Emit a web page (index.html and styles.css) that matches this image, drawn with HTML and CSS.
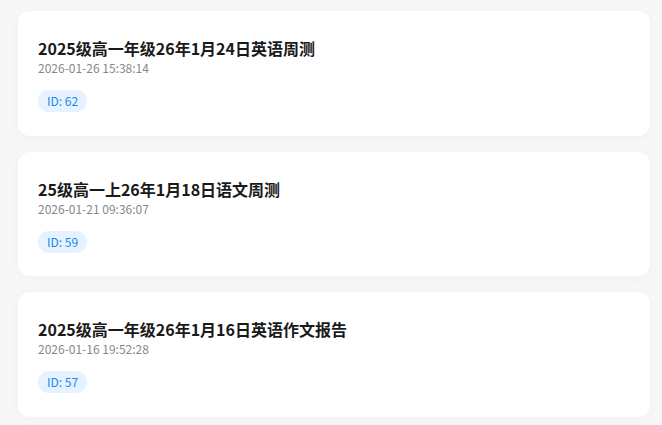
FILE: index.html
```html
<!DOCTYPE html>
<html lang="zh-CN">
<head>
<meta charset="utf-8">
<link rel="stylesheet" href="styles.css">
</head>
<body>
<div class="list">
  <div class="card">
    <div class="title">2025级高一年级26年1月24日英语周测</div>
    <div class="date">2026-01-26 15:38:14</div>
    <span class="badge">ID: 62</span>
  </div>
  <div class="card">
    <div class="title">25级高一上26年1月18日语文周测</div>
    <div class="date">2026-01-21 09:36:07</div>
    <span class="badge">ID: 59</span>
  </div>
  <div class="card">
    <div class="title">2025级高一年级26年1月16日英语作文报告</div>
    <div class="date">2026-01-16 19:52:28</div>
    <span class="badge">ID: 57</span>
  </div>
</div>
</body>
</html>
```
FILE: styles.css
```css
html, body {
  margin: 0;
  padding: 0;
  background: #f7f7f7;
  font-family: "Noto Sans CJK SC", "Noto Sans", sans-serif;
}
.list {
  display: flex;
  flex-direction: column;
  gap: 16px;
  padding: 11px 12px 8px 18px;
}
.card {
  background: #ffffff;
  border-radius: 12px;
  padding: 25px 20px 23.5px;
  box-shadow: 0 2px 12px rgba(0, 0, 0, 0.03);
  display: flex;
  flex-direction: column;
  align-items: flex-start;
}
.title {
  font-size: 16px;
  font-weight: 700;
  color: #1a1a1a;
  line-height: 24px;
}
.date {
  font-size: 12px;
  color: #888888;
  line-height: 16px;
}
.badge {
  margin-top: 14px;
  background: #e6f2ff;
  color: #1a88e8;
  font-size: 12px;
  line-height: 22px;
  padding: 0 9px;
  border-radius: 11px;
}
```
